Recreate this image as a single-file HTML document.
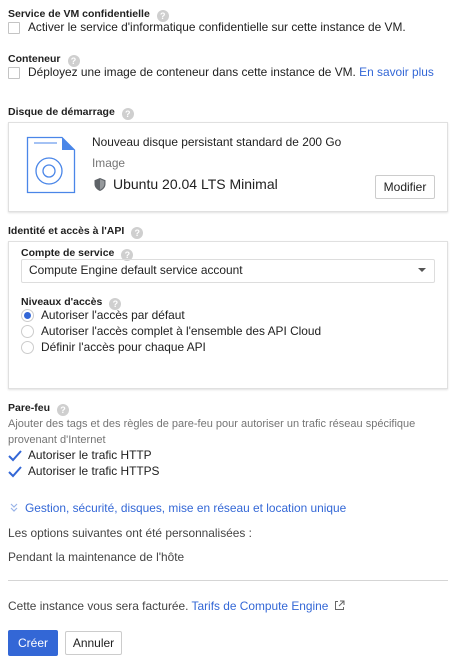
<!DOCTYPE html>
<html><head><meta charset="utf-8"><style>
body{margin:0;width:464px;height:666px;background:#fff;font-family:"Liberation Sans",sans-serif;color:#212121;position:relative;overflow:hidden}
.a{position:absolute;white-space:nowrap}
.b{font-weight:bold;font-size:10.5px;color:#212121}
.t{font-size:11.9px}
.g{color:#757575}
.h{display:inline-block;width:12px;height:12px;border-radius:50%;background:#cfcfcf;color:#fff;font-size:9px;font-weight:bold;text-align:center;line-height:12px;vertical-align:-2px;margin-left:7px}
.cb{position:absolute;width:10px;height:10px;border:1px solid #c4c4c4;border-radius:1px}
.card{position:absolute;left:8px;width:438px;border:1px solid #e0e0e0;box-shadow:0 1px 2px rgba(0,0,0,.12)}
.r{position:absolute;left:21px;width:11px;height:11px;border:1px solid #ccc;border-radius:50%}
.lnk{color:#3367d6}
.btn{position:absolute;border:1px solid #ccc;border-radius:2px;font-size:12px;text-align:center;box-sizing:border-box;background:#fff}
</style></head><body>
<div class="a b" style="left:8px;top:8px">Service de VM confidentielle<span class="h">?</span></div>
<div class="cb" style="left:8px;top:22px"></div>
<div class="a t" style="left:28px;top:20px">Activer le service d'informatique confidentielle sur cette instance de VM.</div>
<div class="a b" style="left:8px;top:53px">Conteneur<span class="h">?</span></div>
<div class="cb" style="left:8px;top:67px"></div>
<div class="a t" style="left:28px;top:65px">Déployez une image de conteneur dans cette instance de VM. <span class="lnk">En savoir plus</span></div>
<div class="a b" style="left:8px;top:106px">Disque de démarrage<span class="h">?</span></div>
<div class="card" style="top:122px;height:88px"></div>
<svg class="a" style="left:26px;top:136px" width="50" height="58" viewBox="0 0 50 58"><path d="M1.5 1.5H36L48.5 14V56.5H1.5Z" fill="#fff" stroke="#4a86e8" stroke-width="1.3"/><path d="M36 1.5L48.5 14H36Z" fill="#4a86e8"/><line x1="8" y1="7" x2="31" y2="7" stroke="#4a86e8"/><circle cx="23" cy="35" r="13" fill="none" stroke="#4a86e8" stroke-width="1.3"/><circle cx="23" cy="35" r="6" fill="none" stroke="#4a86e8" stroke-width="1.3"/></svg>
<div class="a t" style="left:92px;top:135px">Nouveau disque persistant standard de 200 Go</div>
<div class="a t g" style="left:92px;top:156px">Image</div>
<svg class="a" style="left:94px;top:178px" width="12" height="13" viewBox="0 0 12 13"><path d="M6 0L11.5 2.2V6C11.5 9.3 9 11.8 6 13C3 11.8.5 9.3.5 6V2.2Z" fill="#5f6368"/><path d="M6 1.3V11.7C8.3 10.6 10.3 8.6 10.3 6V3Z" fill="#fff" opacity=".35"/></svg>
<div class="a" style="left:113px;top:176px;font-size:14px">Ubuntu 20.04 LTS Minimal</div>
<div class="btn" style="left:375px;top:175px;width:60px;height:24px;line-height:22px">Modifier</div>
<div class="a b" style="left:8px;top:225px">Identité et accès à l'API<span class="h">?</span></div>
<div class="card" style="top:241px;height:146px"></div>
<div class="a b" style="left:21px;top:247px">Compte de service<span class="h">?</span></div>
<div class="a" style="left:21px;top:259px;width:412px;height:22px;border:1px solid #ddd;border-radius:2px"></div>
<div class="a t" style="left:29px;top:263px">Compute Engine default service account</div>
<div class="a" style="left:418px;top:268px;border-left:4px solid transparent;border-right:4px solid transparent;border-top:4px solid #555"></div>
<div class="a b" style="left:21px;top:296px">Niveaux d'accès<span class="h">?</span></div>
<div class="r" style="top:309px;border-color:#ccc"><div style="position:absolute;left:2px;top:2px;width:7px;height:7px;border-radius:50%;background:#3367d6"></div></div>
<div class="a t" style="left:41px;top:308px">Autoriser l'accès par défaut</div>
<div class="r" style="top:325px"></div>
<div class="a t" style="left:41px;top:324px">Autoriser l'accès complet à l'ensemble des API Cloud</div>
<div class="r" style="top:341px"></div>
<div class="a t" style="left:41px;top:340px">Définir l'accès pour chaque API</div>
<div class="a b" style="left:8px;top:402px">Pare-feu<span class="h">?</span></div>
<div class="a g" style="left:8px;top:416px;font-size:11px;line-height:16px">Ajouter des tags et des règles de pare-feu pour autoriser un trafic réseau spécifique<br>provenant d'Internet</div>
<svg class="a" style="left:8px;top:449px" width="14" height="40"><path d="M1 7L5 11L13 2" fill="none" stroke="#3367d6" stroke-width="2"/><path d="M1 23L5 27L13 18" fill="none" stroke="#3367d6" stroke-width="2"/></svg>
<div class="a t" style="left:28px;top:448px">Autoriser le trafic HTTP</div>
<div class="a t" style="left:28px;top:464px">Autoriser le trafic HTTPS</div>
<svg class="a" style="left:10px;top:503px" width="8" height="10"><path d="M1 1L4 4L7 1M1 5L4 8L7 5" fill="none" stroke="#9ab4e8" stroke-width="1.2"/></svg>
<div class="a t lnk" style="left:25px;top:501px">Gestion, sécurité, disques, mise en réseau et location unique</div>
<div class="a t" style="left:8px;top:526px;color:#444">Les options suivantes ont été personnalisées :</div>
<div class="a t" style="left:8px;top:550px;color:#444">Pendant la maintenance de l'hôte</div>
<div class="a" style="left:8px;top:580px;width:440px;height:1px;background:#d5d5d5"></div>
<div class="a t" style="left:8px;top:599px;color:#444">Cette instance vous sera facturée. <span class="lnk">Tarifs de Compute Engine</span></div>
<svg class="a" style="left:334px;top:600px" width="11" height="11"><path d="M4 1.5H1.5V9.5H9.5V7M6 1H10V5M10 1L5 6" fill="none" stroke="#666" stroke-width="1"/></svg>
<div class="btn" style="left:8px;top:630px;width:50px;height:26px;line-height:24px;background:#3367d6;border-color:#3367d6;color:#fff">Créer</div>
<div class="btn" style="left:65px;top:631px;width:57px;height:24px;line-height:22px">Annuler</div>
</body></html>
